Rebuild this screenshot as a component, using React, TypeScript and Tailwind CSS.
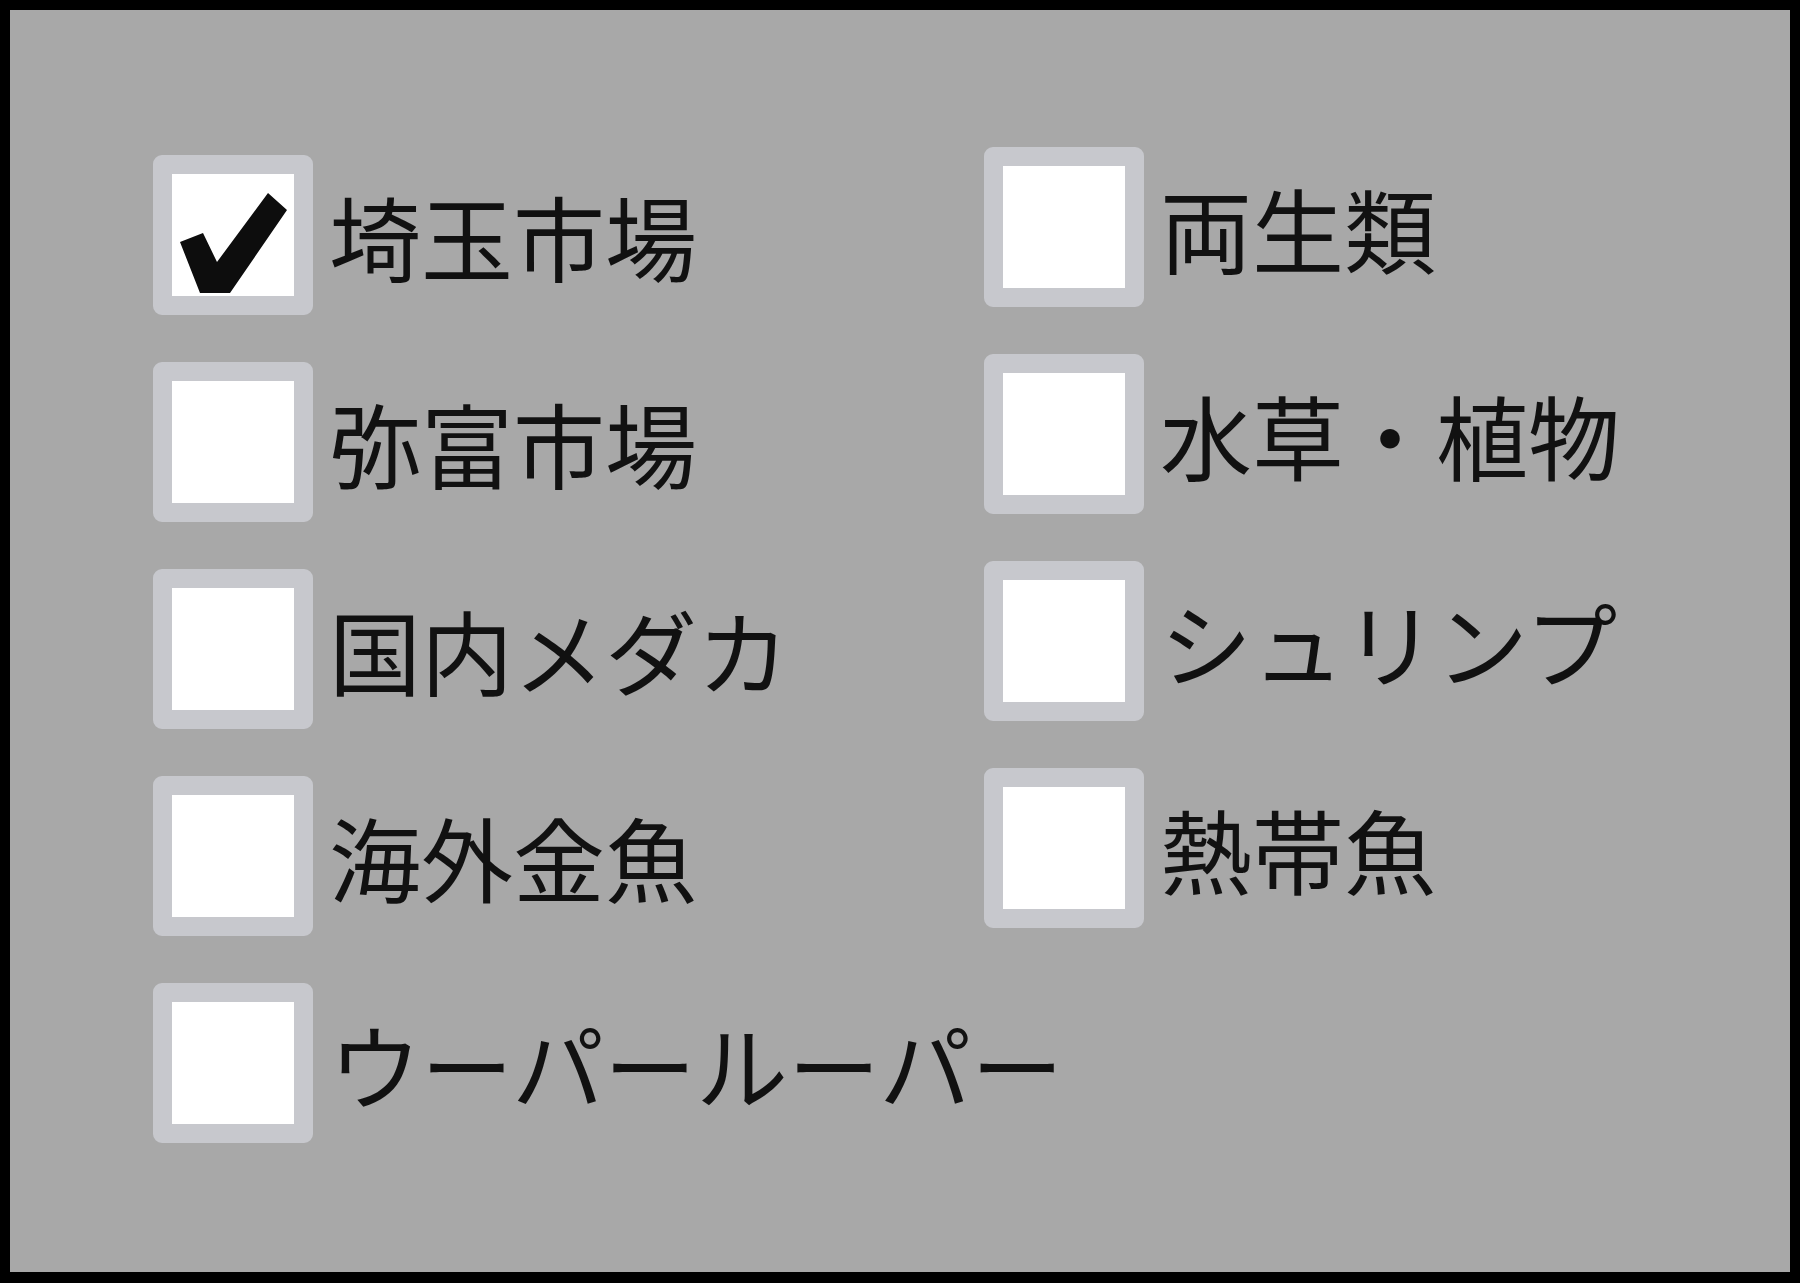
import React, { useState } from 'react';

type Option = { id: string; label: string };

const leftOptions: Option[] = [
  { id: 'saitama', label: '埼玉市場' },
  { id: 'yatomi', label: '弥富市場' },
  { id: 'medaka', label: '国内メダカ' },
  { id: 'goldfish', label: '海外金魚' },
  { id: 'axolotl', label: 'ウーパールーパー' },
];

const rightOptions: Option[] = [
  { id: 'amphibian', label: '両生類' },
  { id: 'plants', label: '水草・植物' },
  { id: 'shrimp', label: 'シュリンプ' },
  { id: 'tropical', label: '熱帯魚' },
];

const CheckMark = () => (
  <svg viewBox="0 0 160 160" className="absolute -inset-[19px] w-[160px] h-[160px]">
    <polygon points="27,87 50,78 64,107 115,38 134,55 77,138 47,138" fill="#0d0d0d" />
  </svg>
);

interface CheckRowProps {
  option: Option;
  checked: boolean;
  onToggle: (id: string) => void;
}

const CheckRow: React.FC<CheckRowProps> = ({ option, checked, onToggle }) => (
  <button type="button" onClick={() => onToggle(option.id)} className="flex items-center text-left">
    <span className="relative block w-[160px] h-[160px] shrink-0 rounded-[9px] border-[19px] border-[#c7c8cd] bg-white">
      {checked && <CheckMark />}
    </span>
    <span
      className="ml-4 text-[92px] leading-none text-[#111111] whitespace-nowrap"
      style={{ fontFamily: '"Noto Sans CJK JP", "Noto Sans", sans-serif' }}
    >
      {option.label}
    </span>
  </button>
);

const App: React.FC = () => {
  const [selected, setSelected] = useState<string[]>(['saitama']);

  const toggle = (id: string) => {
    setSelected((prev) => (prev.includes(id) ? prev.filter((x) => x !== id) : [...prev, id]));
  };

  return (
    <div className="w-[1800px] h-[1283px] bg-black p-[10px] pb-[11px]">
      <div className="w-full h-full bg-[#a8a8a8] flex items-start">
        {/* Left column */}
        <div className="w-[974px] pl-[143px] pt-[145px] flex flex-col gap-[47px]">
          {leftOptions.map((o) => (
            <CheckRow key={o.id} option={o} checked={selected.includes(o.id)} onToggle={toggle} />
          ))}
        </div>

        {/* Right column */}
        <div className="pt-[137px] flex flex-col gap-[47px]">
          {rightOptions.map((o) => (
            <CheckRow key={o.id} option={o} checked={selected.includes(o.id)} onToggle={toggle} />
          ))}
        </div>
      </div>
    </div>
  );
};

export default App;
